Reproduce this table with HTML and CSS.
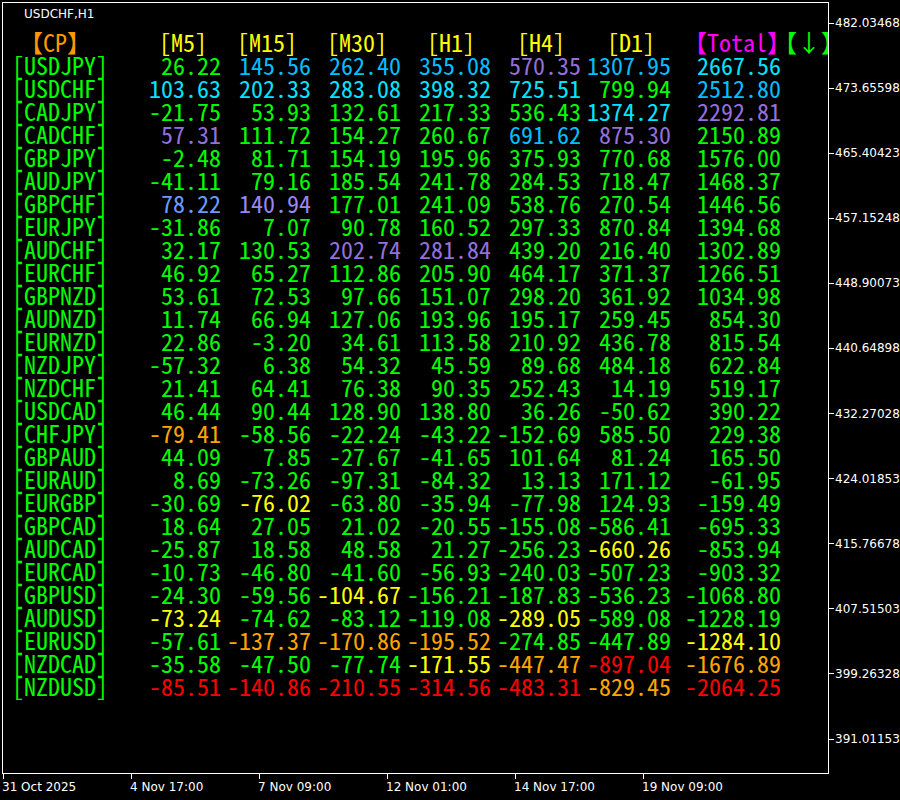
FILE: index.html
```html
<!DOCTYPE html>
<html>
<head>
<meta charset="utf-8">
<link rel="stylesheet" href="styles.css">
</head>
<body>
<div class="screen">
  <div class="chart">
    <div class="title">USDCHF,H1</div>
    <div class="table">
      <span class="h cp">【CP】</span><span class="h hm5">[M5]</span><span class="h hm15">[M15]</span><span class="h hm30">[M30]</span><span class="h hh1">[H1]</span><span class="h hh4">[H4]</span><span class="h hd1">[D1]</span><span class="h ht">【Total】</span><span class="h hd">【↓】</span>

      <span class="n">[USDJPY]</span><span class="v">26.22</span><span class="v b">145.56</span><span class="v b">262.40</span><span class="v b">355.08</span><span class="v p">570.35</span><span class="v b">1307.95</span><span class="v a">2667.56</span>
      <span class="n">[USDCHF]</span><span class="v a">103.63</span><span class="v a">202.33</span><span class="v a">283.08</span><span class="v a">398.32</span><span class="v a">725.51</span><span class="v">799.94</span><span class="v b">2512.80</span>
      <span class="n">[CADJPY]</span><span class="v">-21.75</span><span class="v">53.93</span><span class="v">132.61</span><span class="v">217.33</span><span class="v">536.43</span><span class="v a">1374.27</span><span class="v p">2292.81</span>
      <span class="n">[CADCHF]</span><span class="v p">57.31</span><span class="v">111.72</span><span class="v">154.27</span><span class="v">260.67</span><span class="v b">691.62</span><span class="v p">875.30</span><span class="v">2150.89</span>
      <span class="n">[GBPJPY]</span><span class="v">-2.48</span><span class="v">81.71</span><span class="v">154.19</span><span class="v">195.96</span><span class="v">375.93</span><span class="v">770.68</span><span class="v">1576.00</span>
      <span class="n">[AUDJPY]</span><span class="v">-41.11</span><span class="v">79.16</span><span class="v">185.54</span><span class="v">241.78</span><span class="v">284.53</span><span class="v">718.47</span><span class="v">1468.37</span>
      <span class="n">[GBPCHF]</span><span class="v b2">78.22</span><span class="v p2">140.94</span><span class="v">177.01</span><span class="v">241.09</span><span class="v">538.76</span><span class="v">270.54</span><span class="v">1446.56</span>
      <span class="n">[EURJPY]</span><span class="v">-31.86</span><span class="v">7.07</span><span class="v">90.78</span><span class="v">160.52</span><span class="v">297.33</span><span class="v">870.84</span><span class="v">1394.68</span>
      <span class="n">[AUDCHF]</span><span class="v">32.17</span><span class="v">130.53</span><span class="v p">202.74</span><span class="v p">281.84</span><span class="v">439.20</span><span class="v">216.40</span><span class="v">1302.89</span>
      <span class="n">[EURCHF]</span><span class="v">46.92</span><span class="v">65.27</span><span class="v">112.86</span><span class="v">205.90</span><span class="v">464.17</span><span class="v">371.37</span><span class="v">1266.51</span>
      <span class="n">[GBPNZD]</span><span class="v">53.61</span><span class="v">72.53</span><span class="v">97.66</span><span class="v">151.07</span><span class="v">298.20</span><span class="v">361.92</span><span class="v">1034.98</span>
      <span class="n">[AUDNZD]</span><span class="v">11.74</span><span class="v">66.94</span><span class="v">127.06</span><span class="v">193.96</span><span class="v">195.17</span><span class="v">259.45</span><span class="v">854.30</span>
      <span class="n">[EURNZD]</span><span class="v">22.86</span><span class="v">-3.20</span><span class="v">34.61</span><span class="v">113.58</span><span class="v">210.92</span><span class="v">436.78</span><span class="v">815.54</span>
      <span class="n">[NZDJPY]</span><span class="v">-57.32</span><span class="v">6.38</span><span class="v">54.32</span><span class="v">45.59</span><span class="v">89.68</span><span class="v">484.18</span><span class="v">622.84</span>
      <span class="n">[NZDCHF]</span><span class="v">21.41</span><span class="v">64.41</span><span class="v">76.38</span><span class="v">90.35</span><span class="v">252.43</span><span class="v">14.19</span><span class="v">519.17</span>
      <span class="n">[USDCAD]</span><span class="v">46.44</span><span class="v">90.44</span><span class="v">128.90</span><span class="v">138.80</span><span class="v">36.26</span><span class="v">-50.62</span><span class="v">390.22</span>
      <span class="n">[CHFJPY]</span><span class="v o">-79.41</span><span class="v">-58.56</span><span class="v">-22.24</span><span class="v">-43.22</span><span class="v">-152.69</span><span class="v">585.50</span><span class="v">229.38</span>
      <span class="n">[GBPAUD]</span><span class="v">44.09</span><span class="v">7.85</span><span class="v">-27.67</span><span class="v">-41.65</span><span class="v">101.64</span><span class="v">81.24</span><span class="v">165.50</span>
      <span class="n">[EURAUD]</span><span class="v">8.69</span><span class="v">-73.26</span><span class="v">-97.31</span><span class="v">-84.32</span><span class="v">13.13</span><span class="v">171.12</span><span class="v">-61.95</span>
      <span class="n">[EURGBP]</span><span class="v">-30.69</span><span class="v y">-76.02</span><span class="v">-63.80</span><span class="v">-35.94</span><span class="v">-77.98</span><span class="v">124.93</span><span class="v">-159.49</span>
      <span class="n">[GBPCAD]</span><span class="v">18.64</span><span class="v">27.05</span><span class="v">21.02</span><span class="v">-20.55</span><span class="v">-155.08</span><span class="v">-586.41</span><span class="v">-695.33</span>
      <span class="n">[AUDCAD]</span><span class="v">-25.87</span><span class="v">18.58</span><span class="v">48.58</span><span class="v">21.27</span><span class="v">-256.23</span><span class="v y">-660.26</span><span class="v">-853.94</span>
      <span class="n">[EURCAD]</span><span class="v">-10.73</span><span class="v">-46.80</span><span class="v">-41.60</span><span class="v">-56.93</span><span class="v">-240.03</span><span class="v">-507.23</span><span class="v">-903.32</span>
      <span class="n">[GBPUSD]</span><span class="v">-24.30</span><span class="v">-59.56</span><span class="v y">-104.67</span><span class="v">-156.21</span><span class="v">-187.83</span><span class="v">-536.23</span><span class="v">-1068.80</span>
      <span class="n">[AUDUSD]</span><span class="v y">-73.24</span><span class="v">-74.62</span><span class="v">-83.12</span><span class="v">-119.08</span><span class="v y">-289.05</span><span class="v">-589.08</span><span class="v">-1228.19</span>
      <span class="n">[EURUSD]</span><span class="v">-57.61</span><span class="v o">-137.37</span><span class="v o">-170.86</span><span class="v o">-195.52</span><span class="v">-274.85</span><span class="v">-447.89</span><span class="v y">-1284.10</span>
      <span class="n">[NZDCAD]</span><span class="v">-35.58</span><span class="v">-47.50</span><span class="v">-77.74</span><span class="v y">-171.55</span><span class="v o">-447.47</span><span class="v r">-897.04</span><span class="v o">-1676.89</span>
      <span class="n">[NZDUSD]</span><span class="v r">-85.51</span><span class="v r">-140.86</span><span class="v r">-210.55</span><span class="v r">-314.56</span><span class="v r">-483.31</span><span class="v o">-829.45</span><span class="v r">-2064.25</span>
    </div>
  </div>

  <div class="price-axis">
    <div class="pl">482.03468</div>
    <div class="pl">473.65598</div>
    <div class="pl">465.40423</div>
    <div class="pl">457.15248</div>
    <div class="pl">448.90073</div>
    <div class="pl">440.64898</div>
    <div class="pl">432.27028</div>
    <div class="pl">424.01853</div>
    <div class="pl">415.76678</div>
    <div class="pl">407.51503</div>
    <div class="pl">399.26328</div>
    <div class="pl">391.01153</div>
  </div>

  <div class="time-axis">
    <div class="tl"><span>31 Oct 2025</span></div>
    <div class="tl"><span>4 Nov 17:00</span></div>
    <div class="tl"><span>7 Nov 09:00</span></div>
    <div class="tl"><span>12 Nov 01:00</span></div>
    <div class="tl"><span>14 Nov 17:00</span></div>
    <div class="tl"><span>19 Nov 09:00</span></div>
  </div>
</div>
</body>
</html>
```

FILE: styles.css
```css
html, body {
  margin: 0;
  padding: 0;
  background: #000;
}

.screen {
  display: grid;
  grid-template-columns: 829px 71px;
  grid-template-rows: 774px 26px;
  width: 900px;
  height: 800px;
  overflow: hidden;
  background: #000;
  color: #fff;
  font-family: "DejaVu Sans", "Liberation Sans", sans-serif;
  font-size: 12px;
}

.chart {
  grid-column: 1;
  grid-row: 1;
  margin: 2px 0 0 2px;
  width: 827px;
  height: 772px;
  box-sizing: border-box;
  border: 1px solid #fff;
  overflow: hidden;
  padding-top: 4px;
}

.title {
  height: 14px;
  line-height: 14px;
  padding-left: 21px;
  color: #fff;
}

.table {
  display: grid;
  grid-template-columns: 127px 82px 90px 90px 90px 90px 90px 110px 60px;
  grid-auto-rows: 23.04px;
  margin: 8.5px 0 0 9px;
  font-family: "Noto Sans Mono CJK JP", "DejaVu Sans Mono", "Noto Sans CJK JP", monospace;
  font-size: 24px;
  line-height: 23.04px;
  color: #00ff00;
  white-space: nowrap;
}

.n { grid-column: 1; }
.v { text-align: right; }

.h { color: #ffff00; }
.cp { color: #ff9900; margin-left: 7px; }
.hm5 { margin-left: 20px; }
.hm15 { margin-left: 16px; }
.hm30 { margin-left: 16px; }
.hh1 { margin-left: 26px; }
.hh4 { margin-left: 26px; }
.hd1 { margin-left: 26px; }
.ht { color: #ff00ff; margin-left: 12px; }
.hd { color: #00ff00; margin-left: -8px; }

.a { color: #00e5ff; }
.b { color: #00bfff; }
.b2 { color: #6a9cff; }
.p { color: #9370db; }
.p2 { color: #9a86f0; }
.y { color: #ffff00; }
.o { color: #ffa500; }
.r { color: #ff0000; }

.price-axis {
  grid-column: 2;
  grid-row: 1;
  display: flex;
  flex-direction: column;
  gap: 51.1px;
  padding-top: 16px;
}

.pl {
  display: flex;
  align-items: center;
  gap: 1px;
  height: 14px;
  line-height: 14px;
  white-space: nowrap;
}

.pl::before {
  content: "";
  flex: none;
  width: 5px;
  height: 1px;
  background: #fff;
}

.time-axis {
  grid-column: 1 / span 2;
  grid-row: 2;
  display: flex;
  padding-left: 3px;
}

.tl {
  flex: none;
  width: 128px;
  display: flex;
  flex-direction: column;
}

.tl::before {
  content: "";
  width: 1px;
  height: 5px;
  background: #fff;
}

.tl span {
  margin: 1px 0 0 -1px;
  line-height: 14px;
  white-space: nowrap;
}
```
